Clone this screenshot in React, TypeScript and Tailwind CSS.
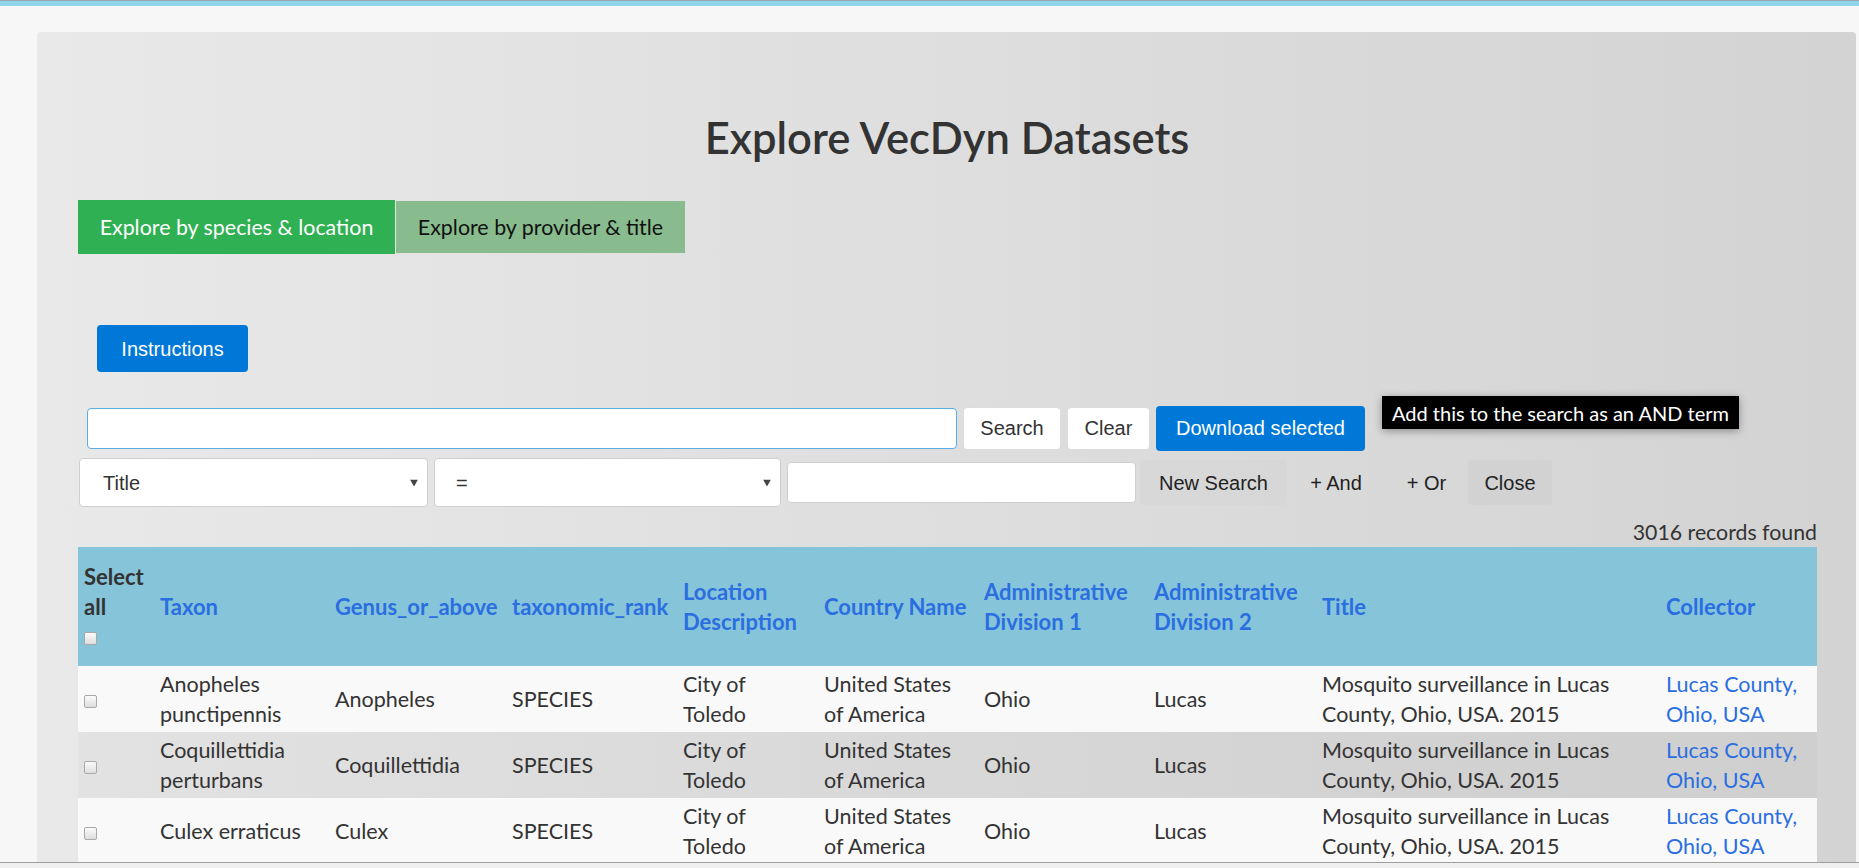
import React from 'react'

interface Row {
  taxon: string
  genus: string
  rank: string
  location: string
  country: string
  admin1: string
  admin2: string
  title: string
  collector: string
}

const rows: Row[] = [
  {
    taxon: 'Anopheles punctipennis',
    genus: 'Anopheles',
    rank: 'SPECIES',
    location: 'City of Toledo',
    country: 'United States of America',
    admin1: 'Ohio',
    admin2: 'Lucas',
    title: 'Mosquito surveillance in Lucas County, Ohio, USA. 2015',
    collector: 'Lucas County, Ohio, USA',
  },
  {
    taxon: 'Coquillettidia perturbans',
    genus: 'Coquillettidia',
    rank: 'SPECIES',
    location: 'City of Toledo',
    country: 'United States of America',
    admin1: 'Ohio',
    admin2: 'Lucas',
    title: 'Mosquito surveillance in Lucas County, Ohio, USA. 2015',
    collector: 'Lucas County, Ohio, USA',
  },
  {
    taxon: 'Culex erraticus',
    genus: 'Culex',
    rank: 'SPECIES',
    location: 'City of Toledo',
    country: 'United States of America',
    admin1: 'Ohio',
    admin2: 'Lucas',
    title: 'Mosquito surveillance in Lucas County, Ohio, USA. 2015',
    collector: 'Lucas County, Ohio, USA',
  },
]

const colWidths = [76, 175, 177, 171, 141, 160, 170, 168, 344, 157]

function Checkbox() {
  return (
    <span className="inline-block h-[13px] w-[13px] rounded-[2px] border border-[#a9a9a9] bg-linear-to-b from-[#fbfbfb] to-[#dedede] align-middle" />
  )
}

function Caret() {
  return (
    <svg width="8" height="7" viewBox="0 0 8 7" className="absolute right-[9px] top-1/2 -translate-y-1/2">
      <path d="M0 0 H8 L4 7 Z" fill="#444" />
    </svg>
  )
}

export default function App() {
  const th = 'px-[6px] align-middle text-left text-[22px] font-bold text-[#2a6ee0]'
  const td = 'px-[6px] py-[3px] align-middle'

  return (
    <div className="relative h-[868px] overflow-hidden bg-[#f7f7f7] font-[Lato,sans-serif] text-[#333]">
      <div className="h-[6px] border-t border-[#9aa6ae] bg-[#8fd5ec]" />

      <div className="ml-[37px] mr-[3px] mt-[26px] h-[900px] rounded-tl-[4px] rounded-tr-[4px] bg-linear-to-r from-[#e9e9e9] to-[#d3d3d3] pl-[41px] pr-[40px] pt-[82px]">
        <h1 className="text-center text-[43.5px] leading-[46px] font-semibold text-[#333]">Explore VecDyn Datasets</h1>

        <div className="mt-[40px] flex">
          <div className="flex h-[54px] w-[317px] items-center justify-center bg-[#2fb052] text-[21.4px] text-white">
            Explore by species &amp; location
          </div>
          <div className="ml-px mt-px flex h-[52px] w-[289px] items-center justify-center bg-[#88bc8e] text-[21.4px] text-[#111]">
            Explore by provider &amp; title
          </div>
        </div>

        <div className="font-['Liberation_Sans',Arial,sans-serif]">
          <button
            type="button"
            className="ml-[19px] mt-[71px] h-[47px] w-[151px] rounded-[4px] bg-[#0078d7] text-[20px] text-white"
          >
            Instructions
          </button>

          <div className="relative mt-[33px] flex h-[46px] items-center gap-[6px]">
            <div className="ml-[9px] h-[41px] w-[870px] rounded-[4px] border border-[#5aaee6] bg-white" />
            <button type="button" className="h-[43px] w-[98px] rounded-[4px] border border-[#dcdcdc] bg-white text-[20px] text-[#333]">
              Search
            </button>
            <button type="button" className="h-[43px] w-[83px] rounded-[4px] border border-[#dcdcdc] bg-white text-[20px] text-[#333]">
              Clear
            </button>
            <button type="button" className="h-[45px] w-[209px] rounded-[4px] bg-[#0078d7] text-[20px] text-white">
              Download selected
            </button>
            <div className="absolute left-[1304px] top-[-9px] flex h-[33px] items-center bg-black px-[10px] font-[Lato,sans-serif] text-[20px] text-white shadow-[0_2px_8px_rgba(0,0,0,0.35)]">
              Add this to the search as an AND term
            </div>
          </div>

          <div className="mt-[7px] flex h-[49px] items-center text-[20px] text-[#333]">
            <div className="relative ml-px flex h-[49px] w-[349px] items-center rounded-[4px] border border-[#cfcfcf] bg-white pl-[23px]">
              Title
              <Caret />
            </div>
            <div className="relative ml-[6px] flex h-[49px] w-[347px] items-center rounded-[4px] border border-[#cfcfcf] bg-white pl-[21px]">
              =
              <Caret />
            </div>
            <div className="ml-[6px] h-[41px] w-[349px] rounded-[4px] border border-[#cfcfcf] bg-white" />
            <div className="ml-[4px] flex h-[45px] w-[147px] items-center justify-center rounded-[4px] bg-[#d6d6d6]/60 text-[#222]">New Search</div>
            <div className="flex h-[45px] w-[98px] items-center justify-center text-[#222]">+ And</div>
            <div className="flex h-[45px] w-[83px] items-center justify-center text-[#222]">+ Or</div>
            <div className="flex h-[45px] w-[84px] items-center justify-center rounded-[4px] bg-[#cfcfcf]/60 text-[#222]">Close</div>
          </div>
        </div>

        <div className="mt-[10px] w-[1739px] text-right text-[21.3px] leading-[30px] text-[#333]">3016 records found</div>

        <table className="w-[1739px] table-fixed border-collapse text-[21.5px] leading-[30px]">
          <colgroup>
            {colWidths.map((w, i) => (
              <col key={i} style={{ width: w }} />
            ))}
          </colgroup>
          <thead>
            <tr className="h-[119px] bg-[#86c4da]">
              <th className="px-[6px] text-left align-middle text-[22px] font-bold text-[#333]">
                Select
                <br />
                all
                <br />
                <Checkbox />
              </th>
              <th className={th}>Taxon</th>
              <th className={th}>Genus_or_above</th>
              <th className={th}>taxonomic_rank</th>
              <th className={th}>Location Description</th>
              <th className={th}>Country Name</th>
              <th className={th}>Administrative Division 1</th>
              <th className={th}>Administrative Division 2</th>
              <th className={th}>Title</th>
              <th className={th}>Collector</th>
            </tr>
          </thead>
          <tbody>
            {rows.map((row, i) => (
              <tr key={i} className={i % 2 === 0 ? 'h-[66px] bg-[#f9f9f9]' : 'h-[66px] bg-black/[0.025]'}>
                <td className={td}>
                  <Checkbox />
                </td>
                <td className={td}>{row.taxon}</td>
                <td className={td}>{row.genus}</td>
                <td className={td}>{row.rank}</td>
                <td className={td}>{row.location}</td>
                <td className={td}>{row.country}</td>
                <td className={td}>{row.admin1}</td>
                <td className={td}>{row.admin2}</td>
                <td className={td}>{row.title}</td>
                <td className={`${td} text-[#2a6ee0]`}>{row.collector}</td>
              </tr>
            ))}
          </tbody>
        </table>
      </div>

      <div className="absolute bottom-0 left-0 right-0 h-[6px] border-t border-[#9d9d9d] bg-[#f0f0f0]" />
    </div>
  )
}
